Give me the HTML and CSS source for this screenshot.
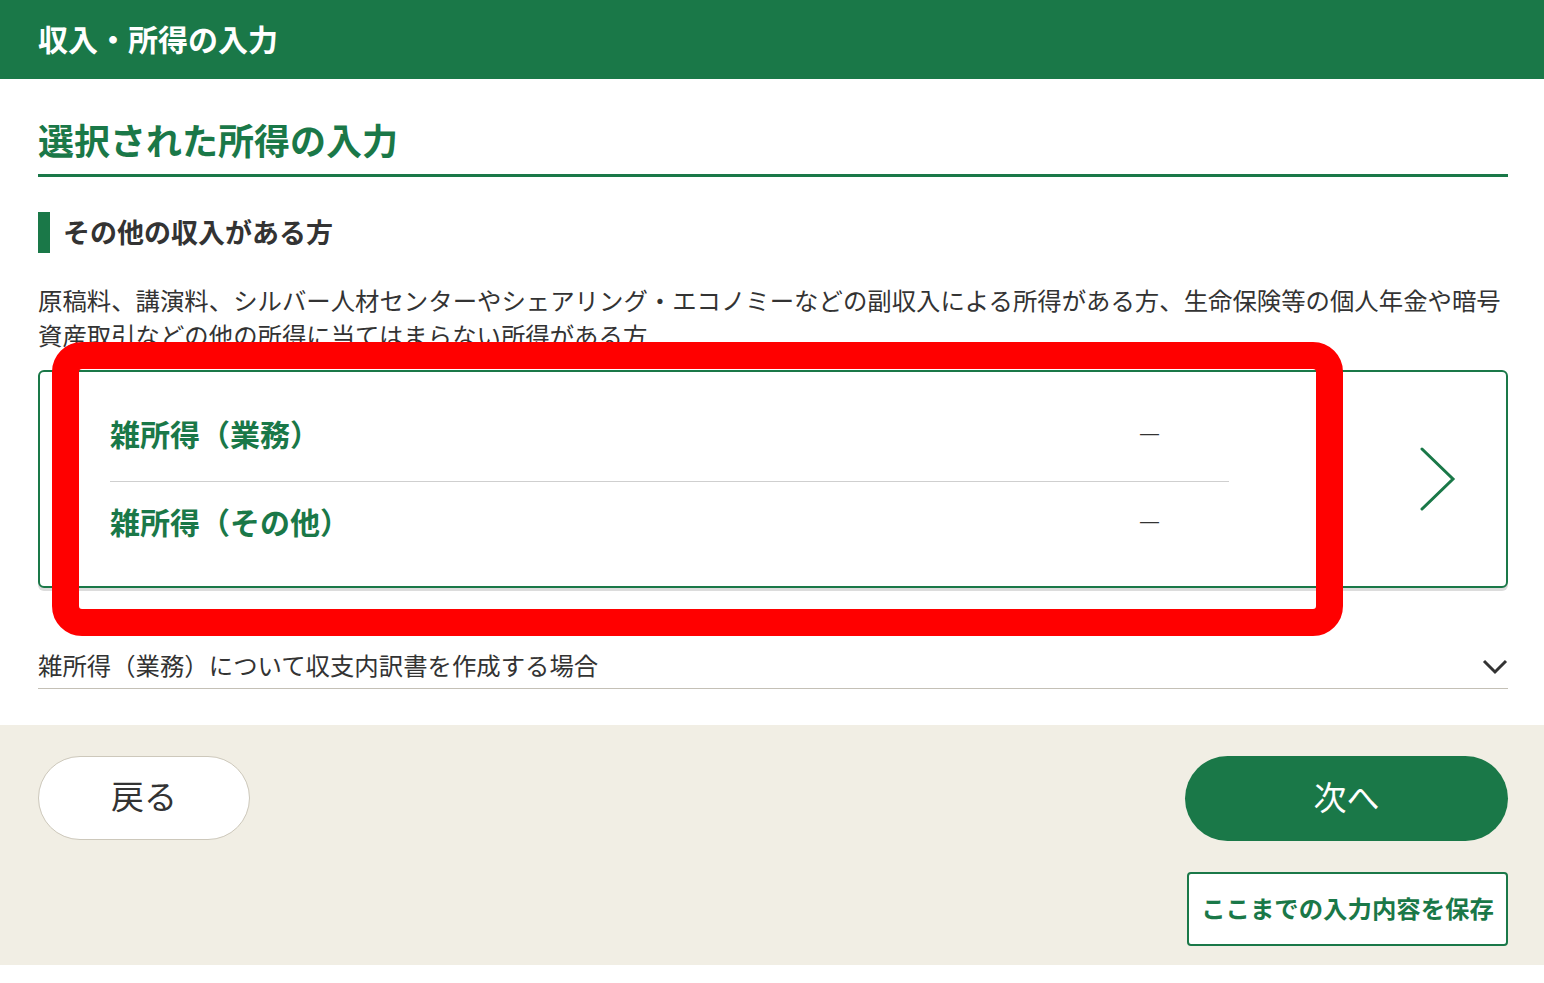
FILE: index.html
```html
<!DOCTYPE html>
<html lang="ja">
<head>
<meta charset="utf-8">
<title>収入・所得の入力</title>
<link rel="stylesheet" href="styles.css">
</head>
<body>
<header class="topbar">
  <div class="topbar-title">収入・所得の入力</div>
</header>
<main class="main">
  <h1 class="page-title">選択された所得の入力</h1>
  <h2 class="section-title">その他の収入がある方</h2>
  <p class="lead">原稿料、講演料、シルバー人材センターやシェアリング・エコノミーなどの副収入による所得がある方、生命保険等の個人年金や暗号資産取引などの他の所得に当てはまらない所得がある方</p>
  <div class="card">
    <ul class="card-list">
      <li class="card-row">
        <span class="card-label">雑所得（業務）</span>
        <span class="card-value">—</span>
      </li>
      <li class="card-row">
        <span class="card-label">雑所得（その他）</span>
        <span class="card-value">—</span>
      </li>
    </ul>
    <div class="card-arrow">
      <svg width="36" height="64" viewBox="0 0 36 64"><polyline points="2,2 33,32 2,62" fill="none" stroke="#1a7848" stroke-width="3" stroke-linecap="round" stroke-linejoin="miter"/></svg>
    </div>
  </div>
  <div class="accordion">
    <span class="accordion-text">雑所得（業務）について収支内訳書を作成する場合</span>
    <svg class="accordion-icon" width="26" height="16" viewBox="0 0 26 16"><polyline points="2,2 13,13 24,2" fill="none" stroke="#333" stroke-width="3"/></svg>
  </div>
</main>
<footer class="actions">
  <button class="btn-back">戻る</button>
  <div class="actions-right">
    <button class="btn-next">次へ</button>
    <button class="btn-save">ここまでの入力内容を保存</button>
  </div>
</footer>
<div class="annotation"></div>
</body>
</html>
```
FILE: styles.css
```css
* { box-sizing: border-box; }
html, body { margin: 0; padding: 0; }
body {
  position: relative;
  background: #fff;
  font-family: "Noto Sans CJK JP", "Noto Sans", sans-serif;
  color: #333;
  width: 1544px;
  min-height: 983px;
  padding-bottom: 17px;
}
.topbar {
  height: 79px;
  background: #1a7848;
  display: flex;
  align-items: center;
  padding-left: 38px;
  padding-bottom: 4px;
}
.topbar-title {
  color: #fff;
  font-size: 30px;
  font-weight: 700;
  line-height: 1;
}
.main {
  padding: 0 36px 36px 38px;
}
.page-title {
  margin: 35px 0 0;
  font-size: 36px;
  line-height: 50px;
  font-weight: 700;
  color: #1a7848;
  padding-bottom: 10px;
  border-bottom: 3px solid #1a7848;
}
.section-title {
  margin: 35px 0 0;
  font-size: 27px;
  line-height: 41px;
  font-weight: 700;
  color: #333;
  border-left: 12px solid #1a7848;
  padding-left: 13px;
  padding-bottom: 3px;
  height: 41px;
  display: flex;
  align-items: center;
}
.lead {
  margin: 29px 0 0;
  font-size: 24.4px;
  line-height: 35px;
  color: #333;
}
.card {
  margin-top: 18px;
  height: 218px;
  border: 2px solid #1a7848;
  border-radius: 6px;
  box-shadow: 0 3px 0 #dcdcdc;
  display: flex;
  align-items: center;
  background: #fff;
}
.card-list {
  list-style: none;
  margin: 0 0 0 70px;
  padding: 0;
  width: 1119px;
}
.card-row {
  display: flex;
  justify-content: space-between;
  align-items: center;
  padding: 20px 70px 28px 0;
  line-height: 40px;
}
.card-row + .card-row {
  border-top: 1px solid #cfcfcf;
  padding-top: 19px;
  padding-bottom: 25px;
}
.card-label {
  font-size: 30px;
  font-weight: 700;
  color: #1a7848;
}
.card-value {
  font-family: "Liberation Sans", sans-serif;
  font-size: 19px;
  color: #333;
}
.card-arrow {
  flex: 1;
  display: flex;
  justify-content: flex-end;
  padding-right: 50px;
}
.card-arrow svg { display: block; }
.accordion {
  margin-top: 59px;
  display: flex;
  justify-content: space-between;
  align-items: center;
  padding-bottom: 6px;
  border-bottom: 1px solid #c4c0b6;
}
.accordion-text {
  font-size: 24.4px;
  line-height: 35px;
  color: #333;
}
.accordion-icon { display: block; margin-top: 4px; }
.actions {
  background: #f1eee4;
  height: 240px;
  padding: 31px 36px 0 38px;
  display: flex;
  justify-content: space-between;
  align-items: flex-start;
}
.actions-right {
  display: flex;
  flex-direction: column;
  align-items: flex-end;
  gap: 31px;
}
button {
  font-family: "Noto Sans CJK JP", sans-serif;
  cursor: pointer;
}
.btn-back {
  width: 212px;
  height: 84px;
  border: 1px solid #cdc8bb;
  border-radius: 42px;
  background: #fff;
  color: #333;
  font-size: 33px;
  padding: 0 0 6px;
}
.btn-next {
  width: 323px;
  height: 85px;
  border: none;
  border-radius: 43px;
  background: #1a7848;
  color: #fff;
  font-size: 33px;
  padding: 0 0 6px;
}
.btn-save {
  width: 321px;
  height: 74px;
  border: 2px solid #1a7848;
  border-radius: 4px;
  background: #fff;
  color: #1a7848;
  font-size: 24.4px;
  font-weight: 700;
  padding: 0 0 4px;
}
.annotation {
  position: absolute;
  left: 52px;
  top: 342px;
  width: 1291px;
  height: 294px;
  border: 27px solid #ff0000;
  border-radius: 30px;
  pointer-events: none;
}
```
